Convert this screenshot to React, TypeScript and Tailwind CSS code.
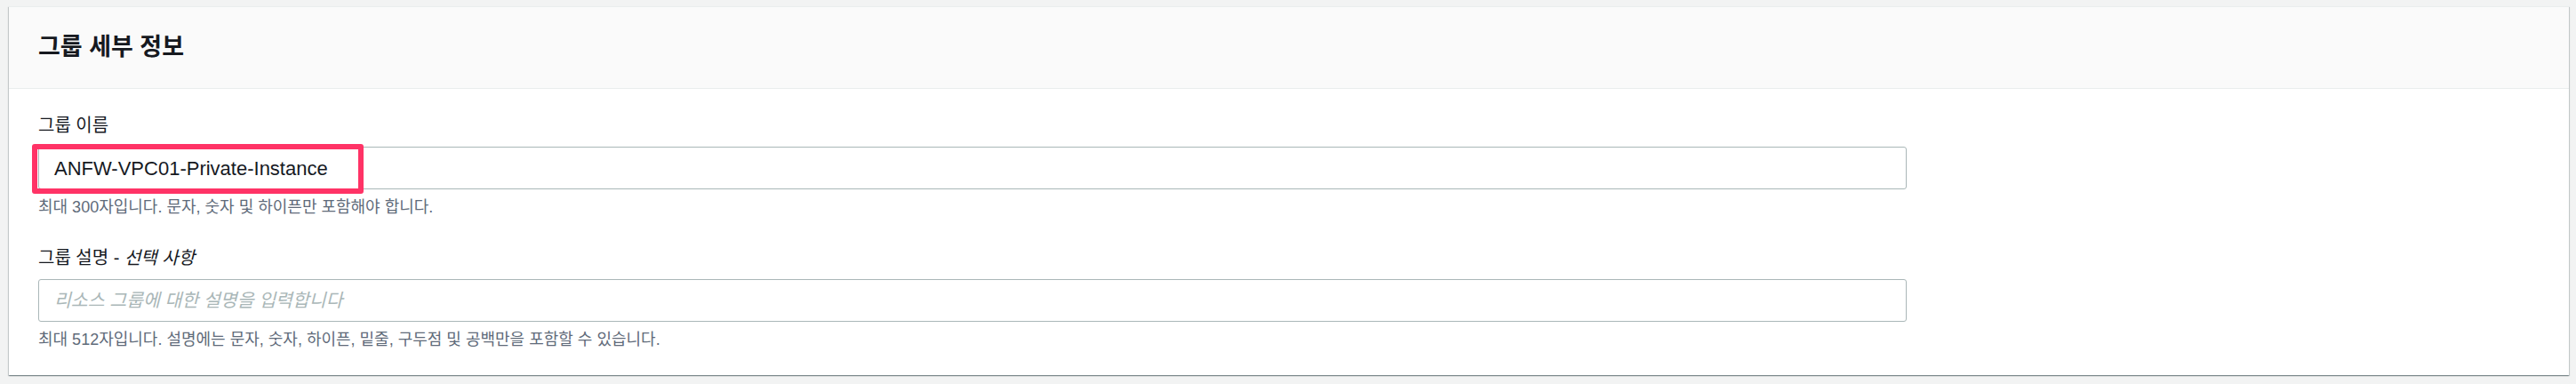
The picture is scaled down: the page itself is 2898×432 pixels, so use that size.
const FONT = '"Liberation Sans", "Noto Sans CJK KR", sans-serif';

function Field({
  label,
  optional,
  value,
  placeholder,
  hint,
  highlighted,
}: {
  label: string;
  optional?: string;
  value?: string;
  placeholder?: string;
  hint: string;
  highlighted?: boolean;
}) {
  return (
    <div className="flex flex-col">
      <div className="text-[20px] leading-[26px] text-[#16191f]">
        {label}
        {optional && (
          <>
            {' - '}
            <span className="italic">{optional}</span>
          </>
        )}
      </div>
      <div className="relative mt-[11px] w-[2102px]">
        <div className="h-[48px] border border-[#aab7b8] rounded-[3px] bg-white flex items-center px-[17px]">
          {value ? (
            <span className="text-[22px] text-[#16191f]">{value}</span>
          ) : (
            <span className="text-[20.5px] italic text-[#aab7b8]">{placeholder}</span>
          )}
        </div>
        {highlighted && (
          <div className="absolute left-[-7px] top-[-3px] w-[373px] h-[56px] border-[6px] border-[#ff3366] rounded-[3px] pointer-events-none" />
        )}
      </div>
      <div className="mt-[9px] text-[18px] leading-[22px] text-[#5f6b7a]">{hint}</div>
    </div>
  );
}

export default function App() {
  return (
    <div className="min-h-screen bg-[#f2f3f3] pt-[7px] pl-[10px] pr-[8px] pb-[6px]" style={{ fontFamily: FONT }}>
      <div className="bg-white shadow-[0_1px_1px_0_rgba(0,28,36,0.3),1px_1px_1px_0_rgba(0,28,36,0.15),-1px_1px_1px_0_rgba(0,28,36,0.15)] border-t border-[#eaeded]">
        <div className="h-[92px] bg-[#fafafa] border-b border-[#eaeded] flex items-center px-[33px]">
          <h2 className="text-[27px] font-bold text-[#16191f]">그룹 세부 정보</h2>
        </div>
        <div className="pl-[33px] pt-[28px] pb-[29px] flex flex-col gap-[33px]">
          <Field
            label="그룹 이름"
            value="ANFW-VPC01-Private-Instance"
            hint="최대 300자입니다. 문자, 숫자 및 하이픈만 포함해야 합니다."
            highlighted
          />
          <Field
            label="그룹 설명"
            optional="선택 사항"
            placeholder="리소스 그룹에 대한 설명을 입력합니다"
            hint="최대 512자입니다. 설명에는 문자, 숫자, 하이픈, 밑줄, 구두점 및 공백만을 포함할 수 있습니다."
          />
        </div>
      </div>
    </div>
  );
}
